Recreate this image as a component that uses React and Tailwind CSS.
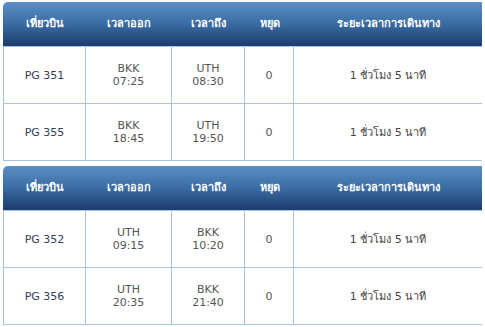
const outbound = [
  { no: 'PG 351', from: 'BKK', dep: '07:25', to: 'UTH', arr: '08:30' },
  { no: 'PG 355', from: 'BKK', dep: '18:45', to: 'UTH', arr: '19:50' },
]

const inbound = [
  { no: 'PG 352', from: 'UTH', dep: '09:15', to: 'BKK', arr: '10:20' },
  { no: 'PG 356', from: 'UTH', dep: '20:35', to: 'BKK', arr: '21:40' },
]

const cols = 'grid grid-cols-[83px_86px_73px_49px_188px]'

function FlightTable({ flights }) {
  return (
    <div className="w-[479px] border-b border-[#a9c3e6]">
      {/* Header */}
      <div
        className={`${cols} h-[44px] items-center rounded-tl-[5px] bg-gradient-to-b from-[#5a8fc5] via-[#3a6ca3] to-[#1c3c6c] text-[11px] font-bold text-white`}
      >
        <div className="text-center">เที่ยวบิน</div>
        <div className="text-center">เวลาออก</div>
        <div className="text-center">เวลาถึง</div>
        <div className="text-center">หยุด</div>
        <div className="text-center">ระยะเวลาการเดินทาง</div>
      </div>

      {/* Rows */}
      {flights.map((f) => (
        <div
          key={f.no}
          className={`${cols} h-[57px] border-t border-[#a9c3e6] text-[11px] leading-[13px] text-[#555]`}
        >
          <div className="flex items-center justify-center border-l border-r border-[#a9c3e6] text-[#343d5c]">
            {f.no}
          </div>
          <div className="flex flex-col items-center justify-center border-r border-[#a9c3e6]">
            <span>{f.from}</span>
            <span>{f.dep}</span>
          </div>
          <div className="flex flex-col items-center justify-center border-r border-[#a9c3e6]">
            <span>{f.to}</span>
            <span>{f.arr}</span>
          </div>
          <div className="flex items-center justify-center border-r border-[#a9c3e6]">0</div>
          <div className="flex items-center justify-center text-[#444]">1 ชั่วโมง 5 นาที</div>
        </div>
      ))}
    </div>
  )
}

export default function App() {
  return (
    <div className="flex h-[327px] w-[485px] flex-col gap-[5px] bg-white pl-[3px] pt-[2px] font-['DejaVu_Sans',Tahoma,sans-serif]">
      <FlightTable flights={outbound} />
      <FlightTable flights={inbound} />
    </div>
  )
}
